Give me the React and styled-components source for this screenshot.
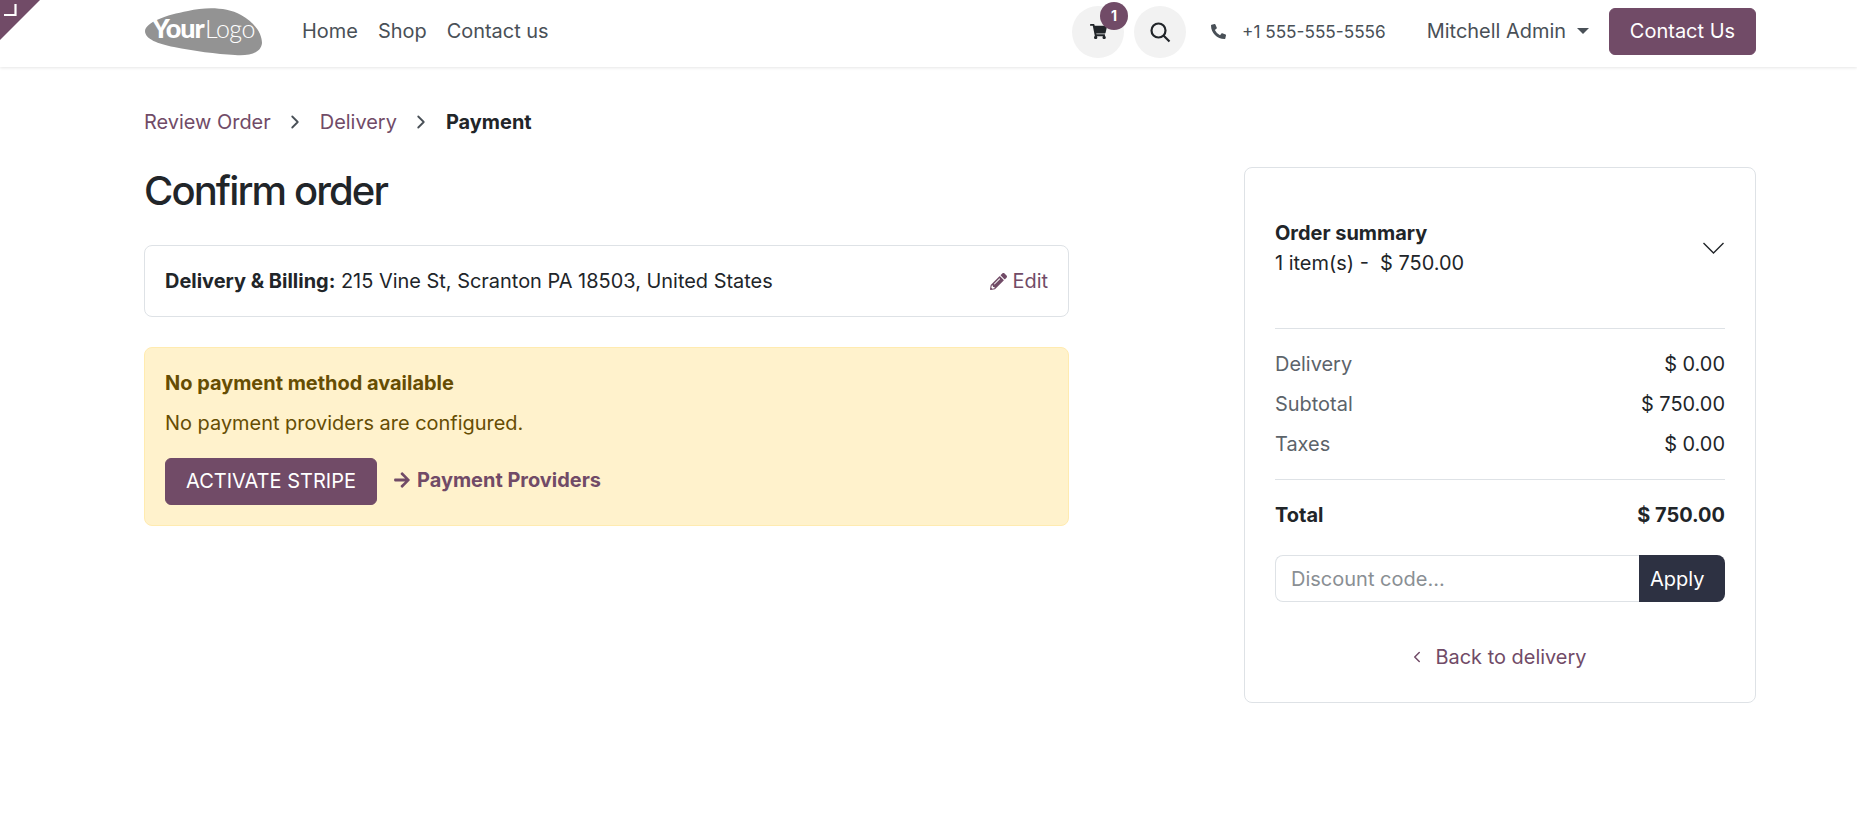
import React from "react";
import styled, { createGlobalStyle } from "styled-components";
import { FaShoppingCart, FaPhoneAlt, FaPencilAlt, FaArrowRight } from "react-icons/fa";
import { LuChevronRight, LuChevronLeft } from "react-icons/lu";

const GlobalStyle = createGlobalStyle`
  html, body {
    margin: 0;
    padding: 0;
    background: #fff;
    font-family: Inter, "Noto Sans", sans-serif;
    font-size: 19.95px;
    color: #212529;
  }
  * { box-sizing: border-box; }
`;

const PRIMARY = "#714b67";

function Corner() {
  return (
    <CornerWrap>
      <svg width="40" height="40" viewBox="0 0 40 40">
        <polygon points="0,0 40,0 0,40" fill={PRIMARY} />
        <path d="M4 15 H15.5 V4" fill="none" stroke="#fff" strokeWidth="2.2" />
      </svg>
    </CornerWrap>
  );
}

function Logo() {
  return (
    <svg width="120" height="52" viewBox="0 0 120 52">
      <path
        d="M1 27 C2 18 22 11 44 7 C62 3 82 3 97 11 C110 18 118 29 118 39 C117 49 106 52 91 51 C72 50 50 47 30 43 C14 40 1 35 1 27 Z"
        fill="#939393"
      />
      <LogoBold x="8" y="34">Your</LogoBold>
      <LogoThin x="61" y="34">Logo</LogoThin>
    </svg>
  );
}

function SearchIcon() {
  return (
    <svg width="22" height="22" viewBox="0 0 22 22" fill="none" stroke="#212529" strokeWidth="2.2">
      <circle cx="9.5" cy="9.5" r="7" />
      <path d="M14.5 14.5 L20.5 20.5" />
    </svg>
  );
}

function SummaryChevron() {
  return (
    <svg width="21" height="12" viewBox="0 0 21 12" fill="none" stroke="#212529" strokeWidth="1.4">
      <path d="M0.5 1 L10.5 11 L20.5 1" />
    </svg>
  );
}

export default function App() {
  return (
    <>
      <GlobalStyle />
      <Corner />
      <Header>
        <LogoLink><Logo /></LogoLink>
        <Nav>
          <NavLink>Home</NavLink>
          <NavLink>Shop</NavLink>
          <NavLink>Contact us</NavLink>
        </Nav>
        <HeaderRight>
          <CircleButton>
            <FaShoppingCart size={17} color="#212529" />
            <CartBadge>1</CartBadge>
          </CircleButton>
          <CircleButton>
            <SearchIcon />
          </CircleButton>
          <Phone>
            <FaPhoneAlt size={15} color="#495057" />
            <span>+1 555-555-5556</span>
          </Phone>
          <UserMenu>
            Mitchell Admin
            <Caret />
          </UserMenu>
          <PrimaryButton $width="147px">Contact Us</PrimaryButton>
        </HeaderRight>
      </Header>

      <Main>
        <LeftColumn>
          <Breadcrumb>
            <CrumbLink>Review Order</CrumbLink>
            <LuChevronRight size={22} color="#495057" />
            <CrumbLink>Delivery</CrumbLink>
            <LuChevronRight size={22} color="#495057" />
            <CrumbCurrent>Payment</CrumbCurrent>
          </Breadcrumb>
          <Title>Confirm order</Title>
          <AddressCard>
            <div>
              <strong>Delivery &amp; Billing:</strong> 215 Vine St, Scranton PA 18503, United States
            </div>
            <EditLink>
              <FaPencilAlt size={17} />
              Edit
            </EditLink>
          </AddressCard>
          <Alert>
            <AlertTitle>No payment method available</AlertTitle>
            <AlertText>No payment providers are configured.</AlertText>
            <AlertActions>
              <PrimaryButton $width="212px">ACTIVATE STRIPE</PrimaryButton>
              <ProvidersLink>
                <FaArrowRight size={18} />
                Payment Providers
              </ProvidersLink>
            </AlertActions>
          </Alert>
        </LeftColumn>

        <Summary>
          <SummaryHead>
            <div>
              <SummaryTitle>Order summary</SummaryTitle>
              <div>1 item(s) -&nbsp; $ 750.00</div>
            </div>
            <SummaryChevron />
          </SummaryHead>
          <Rows>
            <Row><RowLabel>Delivery</RowLabel><span>$ 0.00</span></Row>
            <Row><RowLabel>Subtotal</RowLabel><span>$ 750.00</span></Row>
            <Row><RowLabel>Taxes</RowLabel><span>$ 0.00</span></Row>
          </Rows>
          <TotalRow><span>Total</span><span>$ 750.00</span></TotalRow>
          <DiscountForm>
            <DiscountInput placeholder="Discount code..." />
            <ApplyButton>Apply</ApplyButton>
          </DiscountForm>
          <BackLink>
            <LuChevronLeft size={18} />
            Back to delivery
          </BackLink>
        </Summary>
      </Main>
    </>
  );
}

const CornerWrap = styled.div`
  position: absolute;
  top: 0;
  left: 0;
  width: 40px;
  height: 40px;
  z-index: 5;
  svg { display: block; }
`;

const Header = styled.header`
  height: 67px;
  display: flex;
  align-items: center;
  padding: 0 101px 4px 144px;
  background: #fff;
  box-shadow: 0 1px 3px rgba(0, 0, 0, 0.1);
`;

const LogoLink = styled.a`
  display: flex;
  width: 120px;
  margin-right: 38px;
  margin-top: -3px;
`;

const LogoBold = styled.text`
  font-family: Lato, sans-serif;
  font-weight: 900;
  font-size: 27px;
  letter-spacing: -1px;
  fill: #fff;
`;

const LogoThin = styled.text`
  font-family: Lato, sans-serif;
  font-weight: 300;
  font-size: 25px;
  letter-spacing: -0.5px;
  fill: #fff;
`;

const Nav = styled.nav`
  display: flex;
  gap: 20px;
  margin-top: -2px;
`;

const NavLink = styled.a`
  color: #495057;
`;

const HeaderRight = styled.div`
  margin-left: auto;
  display: flex;
  align-items: center;
`;

const CircleButton = styled.div`
  position: relative;
  width: 52px;
  height: 52px;
  border-radius: 50%;
  background: #f2f2f2;
  display: flex;
  align-items: center;
  justify-content: center;
  margin-right: 10px;
`;

const CartBadge = styled.span`
  position: absolute;
  top: -4px;
  right: -4px;
  width: 28px;
  height: 28px;
  border-radius: 50%;
  background: ${PRIMARY};
  color: #fff;
  font-size: 14px;
  font-weight: 700;
  display: flex;
  align-items: center;
  justify-content: center;
`;

const Phone = styled.div`
  display: flex;
  align-items: center;
  gap: 16px;
  margin-left: 15px;
  color: #495057;
  font-size: 17.2px;
`;

const UserMenu = styled.div`
  display: flex;
  align-items: center;
  gap: 11px;
  margin-left: 41px;
  margin-top: -1px;
  color: #495057;
`;

const Caret = styled.span`
  width: 0;
  height: 0;
  border-left: 6px solid transparent;
  border-right: 6px solid transparent;
  border-top: 6px solid #495057;
`;

const PrimaryButton = styled.button`
  width: ${(props) => props.$width};
  height: 47px;
  padding: 0 0 2px;
  border: 1px solid ${PRIMARY};
  border-radius: 6px;
  background: ${PRIMARY};
  color: #fff;
  font-family: inherit;
  font-size: 20px;
  flex-shrink: 0;

  ${UserMenu} + & {
    margin-left: 20px;
  }
`;

const Main = styled.main`
  display: flex;
  justify-content: space-between;
  padding: 0 101px 0 144px;
`;

const LeftColumn = styled.div`
  width: 925px;
`;

const Breadcrumb = styled.div`
  display: flex;
  align-items: center;
  gap: 13.5px;
  height: 22px;
  margin-top: 44px;
`;

const CrumbLink = styled.a`
  color: ${PRIMARY};
`;

const CrumbCurrent = styled.span`
  font-weight: 700;
  color: #212529;
`;

const Title = styled.h1`
  margin: 34px 0 0;
  font-size: 40px;
  line-height: 48px;
  font-weight: 500;
  letter-spacing: -1.9px;
  color: #212529;
`;

const AddressCard = styled.div`
  margin-top: 30px;
  height: 72px;
  padding: 0 20px;
  border: 1px solid #dee2e6;
  border-radius: 8px;
  display: flex;
  align-items: center;
  justify-content: space-between;

  strong { font-weight: 700; }
`;

const EditLink = styled.a`
  display: flex;
  align-items: center;
  gap: 5px;
  color: ${PRIMARY};
`;

const Alert = styled.div`
  margin-top: 30px;
  height: 179px;
  padding: 22px 20px 0;
  background: #fff2cc;
  border: 1px solid #ffebb0;
  border-radius: 8px;
  color: #664d03;
`;

const AlertTitle = styled.div`
  font-weight: 700;
  line-height: 26px;
`;

const AlertText = styled.div`
  margin-top: 14px;
  line-height: 26px;
`;

const AlertActions = styled.div`
  margin-top: 22px;
  display: flex;
  align-items: center;
  gap: 16px;
`;

const ProvidersLink = styled.a`
  display: flex;
  align-items: center;
  gap: 6px;
  margin-top: -4px;
  font-weight: 700;
  color: ${PRIMARY};
`;

const Summary = styled.aside`
  width: 512px;
  height: 536px;
  margin-top: 100px;
  padding: 0 30px;
  border: 1px solid #dee2e6;
  border-radius: 8px;
`;

const SummaryHead = styled.div`
  height: 161px;
  display: flex;
  align-items: center;
  justify-content: space-between;
  border-bottom: 1px solid #dee2e6;
  padding-top: 12px;
  padding-bottom: 12px;
  padding-right: 1px;
  line-height: 30px;
`;

const SummaryTitle = styled.div`
  font-weight: 700;
`;

const Rows = styled.div`
  padding: 15px 0;
  border-bottom: 1px solid #dee2e6;
`;

const Row = styled.div`
  display: flex;
  justify-content: space-between;
  align-items: center;
  height: 40px;
`;

const RowLabel = styled.span`
  color: #5c636a;
`;

const TotalRow = styled.div`
  display: flex;
  justify-content: space-between;
  align-items: center;
  height: 70px;
  font-weight: 700;
`;

const DiscountForm = styled.div`
  display: flex;
  height: 47px;
  margin-top: 5px;
`;

const DiscountInput = styled.input`
  flex: 1;
  min-width: 0;
  padding: 0 15px;
  border: 1px solid #dee2e6;
  border-right: none;
  border-radius: 8px 0 0 8px;
  font-family: inherit;
  font-size: 20px;
  outline: none;

  &::placeholder {
    color: #8a8f94;
  }
`;

const ApplyButton = styled.button`
  width: 86px;
  border: none;
  border-radius: 0 8px 8px 0;
  background: #2d3142;
  color: #fff;
  font-family: inherit;
  font-size: 20px;
  text-align: left;
  padding: 0 0 0 11px;
`;

const BackLink = styled.a`
  margin-top: 43px;
  padding-right: 5px;
  display: flex;
  align-items: center;
  justify-content: center;
  gap: 9px;
  color: ${PRIMARY};
  height: 24px;
`;
